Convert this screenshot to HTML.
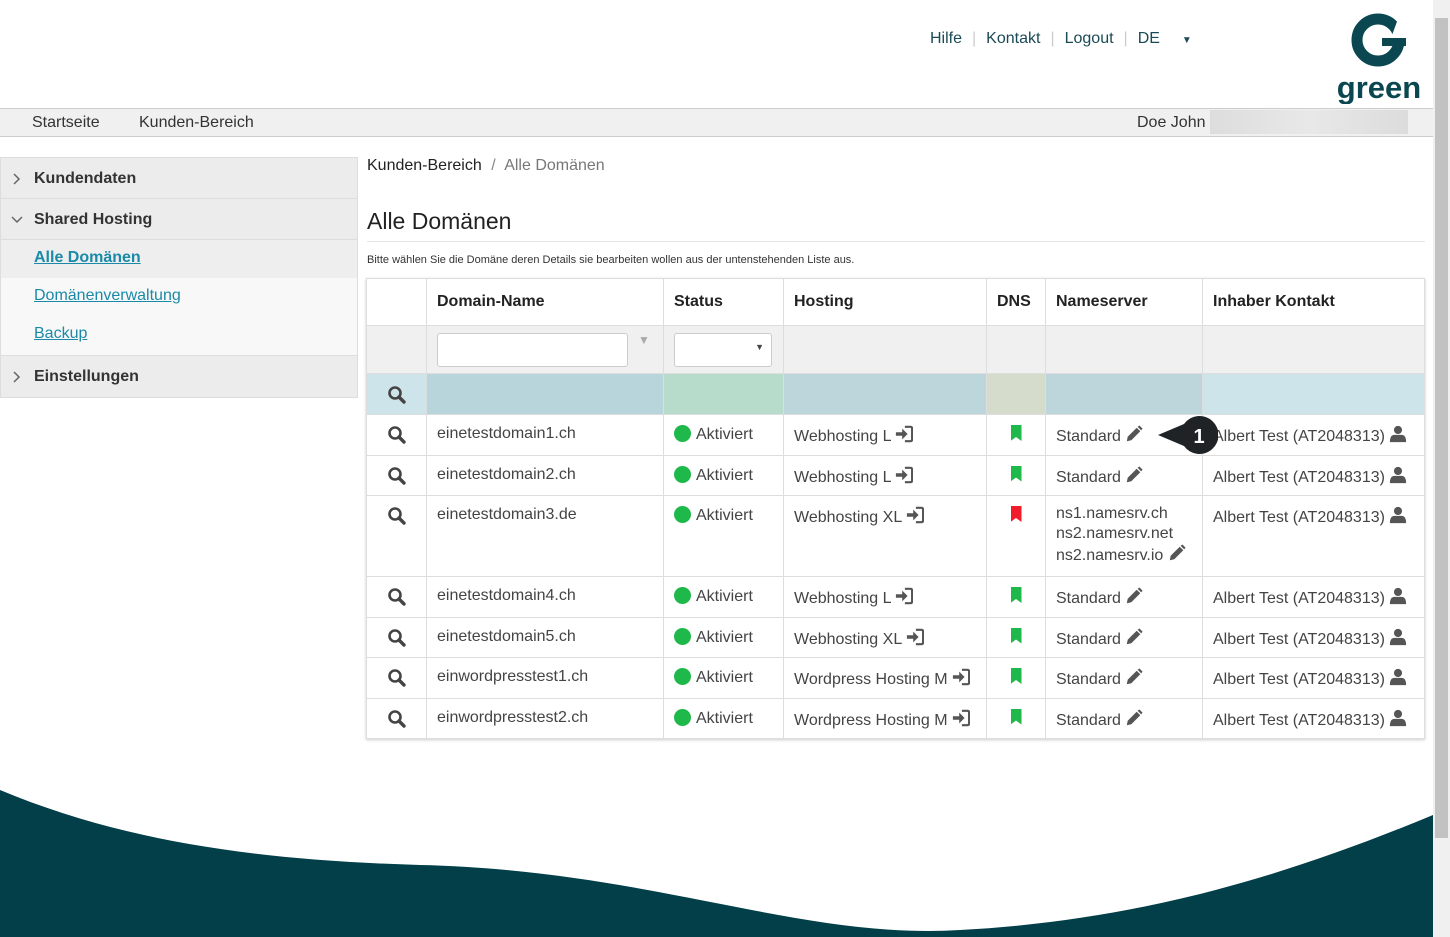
<!DOCTYPE html>
<html><head><meta charset="utf-8"><style>
*{box-sizing:border-box;margin:0;padding:0}
body{width:1450px;height:937px;overflow:hidden;background:#fff;font-family:"Liberation Sans",sans-serif;color:#333;position:relative}
.a{position:absolute}
.top a{color:#1a4a55;text-decoration:none;font-size:16px}
.nav{left:0;top:108px;width:1433px;height:29px;background:#f0f0f0;border-top:1px solid #ccc;border-bottom:1px solid #ccc;font-size:16px}
.side{left:0;top:157px;width:358px;border:1px solid #ddd}
.side .h{height:41px;background:#ececec;border-bottom:1px solid #ddd;font-weight:bold;font-size:16px;line-height:41px;padding-left:33px;position:relative;color:#333}
.side .h svg{position:absolute;left:10px;top:15px}
.side .l{height:38px;background:#f8f8f8;line-height:36px;padding-left:33px;font-size:16px}
.side .l a{color:#1a8aa8;text-decoration:underline}
table{border-collapse:collapse;position:absolute;left:366px;top:278px;font-size:16px;box-shadow:0 1px 3px rgba(0,0,0,.2)}
td,th{border:1px solid #ddd;padding:0 10px;text-align:left;vertical-align:top}
th{height:47px;vertical-align:middle;font-weight:bold;color:#222}
tr.f td{height:48px;background:#f0f0f0}
tr.b td{height:41px;background:#cde4ea}
tr.r td{height:40.5px;padding-top:10px;color:#444}
.dot{display:inline-block;width:17px;height:17px;border-radius:50%;background:#1fb84a;vertical-align:-3px;margin-right:5px}
.bm{display:inline-block;width:11px;height:16px;background:#1fb84a;clip-path:polygon(0 0,100% 0,100% 100%,50% 75%,0 100%)}
.c{text-align:center}
svg.i{vertical-align:-2px}
</style></head><body>
<svg width="0" height="0" style="position:absolute">
<defs>
<symbol id="s" viewBox="0 0 20 20"><circle cx="8" cy="8" r="5.5" fill="none" stroke="#444" stroke-width="2.6"/><path d="M12 12 L17 17" stroke="#444" stroke-width="3.4" stroke-linecap="round"/></symbol>
<symbol id="p" viewBox="0 0 20 20"><path d="M2 18 L3 13 L13 3 L17 7 L7 17 Z M14 2 L16 0.5 L19.5 4 L18 6Z" fill="#555"/></symbol>
<symbol id="u" viewBox="0 0 20 20"><circle cx="10" cy="5.5" r="4.5" fill="#555"/><path d="M1 19 Q1 11 6 11 L14 11 Q19 11 19 19Z" fill="#555"/></symbol>
<symbol id="g" viewBox="0 0 20 20"><path d="M1 8 L8 8 L8 4 L14 10 L8 16 L8 12 L1 12Z" fill="#555"/><path d="M11 2 L17 2 Q19 2 19 4 L19 16 Q19 18 17 18 L11 18" fill="none" stroke="#555" stroke-width="2.4"/></symbol>
</defs></svg>
<div class="a top" style="left:930px;top:30px;">
<a>Hilfe</a><span style="color:#ccc;margin:0 10px">|</span><a>Kontakt</a><span style="color:#ccc;margin:0 10px">|</span><a>Logout</a><span style="color:#ccc;margin:0 10px">|</span><a>DE</a><span style="margin-left:22px;font-size:10px;color:#1a4a55">▼</span>
</div>
<svg class="a" style="left:1336px;top:8px" width="90" height="96" viewBox="0 0 90 96">
<circle cx="42" cy="32" r="21" fill="none" stroke="#0b4750" stroke-width="11"/>
<rect x="55" y="10" width="20" height="20" fill="#fff" transform="rotate(20 55 30)"/>
<path d="M46 30 L70 30 L70 38 L46 38Z" fill="#0b4750"/>
<text x="43" y="90" text-anchor="middle" font-family="Liberation Sans" font-weight="bold" font-size="31" fill="#0b4750">green</text>
</svg>
<div class="a nav"><span class="a" style="left:32px;top:5px">Startseite</span><span class="a" style="left:139px;top:5px">Kunden-Bereich</span><span class="a" style="left:1137px;top:5px">Doe John</span><div class="a" style="left:1210px;top:1px;width:198px;height:24px;background:linear-gradient(90deg,#ddd,#e8e8e8 50%,#dcdcdc)"></div></div>
<div class="a side">
<div class="h"><svg width="10" height="12"><path d="M3 1 L8 6 L3 11" fill="none" stroke="#666" stroke-width="1.5"/></svg>Kundendaten</div>
<div class="h"><svg width="12" height="10"><path d="M1 3 L6 8 L11 3" fill="none" stroke="#666" stroke-width="1.5"/></svg>Shared Hosting</div>
<div class="l" style="background:#eee"><a style="font-weight:bold">Alle Domänen</a></div>
<div class="l"><a>Domänenverwaltung</a></div>
<div class="l" style="height:40px;border-bottom:1px solid #ddd"><a>Backup</a></div>
<div class="h" style="border-bottom:0"><svg width="10" height="12"><path d="M3 1 L8 6 L3 11" fill="none" stroke="#666" stroke-width="1.5"/></svg>Einstellungen</div>
</div>
<div class="a" style="left:367px;top:157px;font-size:16px;color:#222">Kunden-Bereich <span style="color:#888;margin:0 5px">/</span> <span style="color:#777">Alle Domänen</span></div>
<div class="a" style="left:367px;top:208px;font-size:23px;color:#222;width:1058px;border-bottom:1px solid #e5e5e5;padding-bottom:6px">Alle Domänen</div>
<div class="a" style="left:367px;top:254px;font-size:11px;color:#333">Bitte wählen Sie die Domäne deren Details sie bearbeiten wollen aus der untenstehenden Liste aus.</div>
<table>
<tr><th style="width:60px"></th><th style="width:237px">Domain-Name</th><th style="width:120px">Status</th><th style="width:203px">Hosting</th><th style="width:59px">DNS</th><th style="width:157px">Nameserver</th><th style="width:222px">Inhaber Kontakt</th></tr>
<tr class="f"><td></td><td style="padding-top:7px"><div style="width:191px;height:34px;background:#fff;border:1px solid #ccc;border-radius:3px;display:inline-block"></div><span style="color:#aaa;margin-left:10px;font-size:12px;vertical-align:top">▼</span></td><td style="padding:7px 10px 0 10px"><div style="width:98px;height:34px;background:#fff;border:1px solid #ccc;border-radius:3px;text-align:right;padding:8px 7px 0 0;font-size:9px;color:#444">▼</div></td><td></td><td></td><td></td><td></td></tr>
<tr class="b"><td class="c" style="padding-top:11px"><svg class="i" width="20" height="20"><use href="#s"/></svg></td><td style="background:#b9d5dc"></td><td style="background:#b8dccc"></td><td style="background:#bcd6dc"></td><td style="background:#d6dccc"></td><td style="background:#bcd6dc"></td><td></td></tr>
<tr class="r"><td class="c"><svg class="i" width="20" height="20"><use href="#s"/></svg></td><td>einetestdomain1.ch</td><td><span class="dot"></span>Aktiviert</td><td>Webhosting L <svg class="i" width="18" height="18"><use href="#g"/></svg></td><td class="c"><span class="bm"></span></td><td>Standard <svg class="i" width="18" height="18"><use href="#p"/></svg></td><td>Albert Test (AT2048313) <svg class="i" width="18" height="18"><use href="#u"/></svg></td></tr>
<tr class="r"><td class="c"><svg class="i" width="20" height="20"><use href="#s"/></svg></td><td>einetestdomain2.ch</td><td><span class="dot"></span>Aktiviert</td><td>Webhosting L <svg class="i" width="18" height="18"><use href="#g"/></svg></td><td class="c"><span class="bm"></span></td><td>Standard <svg class="i" width="18" height="18"><use href="#p"/></svg></td><td>Albert Test (AT2048313) <svg class="i" width="18" height="18"><use href="#u"/></svg></td></tr>
<tr class="r"><td class="c" style="height:81px"><svg class="i" width="20" height="20"><use href="#s"/></svg></td><td>einetestdomain3.de</td><td><span class="dot"></span>Aktiviert</td><td>Webhosting XL <svg class="i" width="18" height="18"><use href="#g"/></svg></td><td class="c"><span class="bm" style="background:#f01c2c"></span></td><td style="line-height:20px;padding-top:8px">ns1.namesrv.ch<br>ns2.namesrv.net<br>ns2.namesrv.io <svg class="i" width="18" height="18"><use href="#p"/></svg></td><td>Albert Test (AT2048313) <svg class="i" width="18" height="18"><use href="#u"/></svg></td></tr>
<tr class="r"><td class="c"><svg class="i" width="20" height="20"><use href="#s"/></svg></td><td>einetestdomain4.ch</td><td><span class="dot"></span>Aktiviert</td><td>Webhosting L <svg class="i" width="18" height="18"><use href="#g"/></svg></td><td class="c"><span class="bm"></span></td><td>Standard <svg class="i" width="18" height="18"><use href="#p"/></svg></td><td>Albert Test (AT2048313) <svg class="i" width="18" height="18"><use href="#u"/></svg></td></tr>
<tr class="r"><td class="c"><svg class="i" width="20" height="20"><use href="#s"/></svg></td><td>einetestdomain5.ch</td><td><span class="dot"></span>Aktiviert</td><td>Webhosting XL <svg class="i" width="18" height="18"><use href="#g"/></svg></td><td class="c"><span class="bm"></span></td><td>Standard <svg class="i" width="18" height="18"><use href="#p"/></svg></td><td>Albert Test (AT2048313) <svg class="i" width="18" height="18"><use href="#u"/></svg></td></tr>
<tr class="r"><td class="c"><svg class="i" width="20" height="20"><use href="#s"/></svg></td><td>einwordpresstest1.ch</td><td><span class="dot"></span>Aktiviert</td><td>Wordpress Hosting M <svg class="i" width="18" height="18"><use href="#g"/></svg></td><td class="c"><span class="bm"></span></td><td>Standard <svg class="i" width="18" height="18"><use href="#p"/></svg></td><td>Albert Test (AT2048313) <svg class="i" width="18" height="18"><use href="#u"/></svg></td></tr>
<tr class="r"><td class="c"><svg class="i" width="20" height="20"><use href="#s"/></svg></td><td>einwordpresstest2.ch</td><td><span class="dot"></span>Aktiviert</td><td>Wordpress Hosting M <svg class="i" width="18" height="18"><use href="#g"/></svg></td><td class="c"><span class="bm"></span></td><td>Standard <svg class="i" width="18" height="18"><use href="#p"/></svg></td><td>Albert Test (AT2048313) <svg class="i" width="18" height="18"><use href="#u"/></svg></td></tr>
</table>
<svg class="a" style="left:1158px;top:416px" width="60" height="38"><path d="M0 19 L26 8 A19 19 0 1 1 26 30Z" fill="#1f2326"/><text x="41" y="27" text-anchor="middle" font-family="Liberation Sans" font-weight="bold" font-size="20" fill="#fff">1</text></svg>
<svg class="a" style="left:0;top:780px" width="1433" height="157"><path d="M0 10 C120 60 250 80 420 85 C650 90 800 160 960 150 C1150 140 1300 90 1433 35 L1433 157 L0 157Z" fill="#033f48"/></svg>
<div class="a" style="left:1433px;top:0;width:17px;height:937px;background:#f0f0f0"><div style="margin:18px 2px;height:820px;background:#c2c2c2"></div></div>
</body></html>
